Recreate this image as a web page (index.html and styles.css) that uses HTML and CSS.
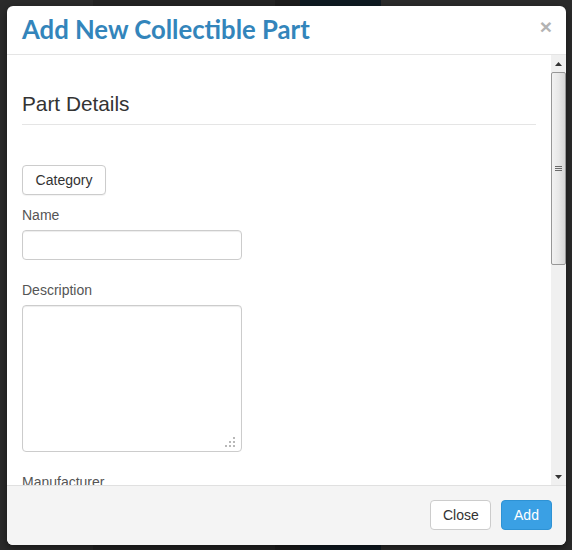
FILE: index.html
```html
<!DOCTYPE html>
<html>
<head>
<meta charset="utf-8">
<link rel="stylesheet" href="styles.css">
</head>
<body>
<div class="page">
  <div class="modal">
    <div class="modal-header">
      <h2 class="modal-title">Add New Collectible Part</h2>
      <span class="close-x">×</span>
    </div>
    <div class="modal-body">
      <div class="body-content">
        <h3 class="section-title">Part Details</h3>
        <button class="btn btn-default category-btn">Category</button>
        <label class="field-label">Name</label>
        <div class="text-input"></div>
        <label class="field-label label-gap">Description</label>
        <div class="text-area">
          <svg class="grip" width="10" height="10" viewBox="0 0 10 10">
            <rect x="8" y="0" width="2" height="2" fill="#b8b8b8"/>
            <rect x="4" y="4" width="2" height="2" fill="#b8b8b8"/>
            <rect x="8" y="4" width="2" height="2" fill="#b8b8b8"/>
            <rect x="0" y="8" width="2" height="2" fill="#b8b8b8"/>
            <rect x="4" y="8" width="2" height="2" fill="#b8b8b8"/>
            <rect x="8" y="8" width="2" height="2" fill="#b8b8b8"/>
          </svg>
        </div>
        <label class="field-label label-gap">Manufacturer</label>
      </div>
      <div class="scrollbar">
        <div class="sb-btn"><svg width="7" height="4" viewBox="0 0 7 4"><path d="M3.5 0 L7 4 L0 4 Z" fill="#333"/></svg></div>
        <div class="sb-thumb">
          <div class="sb-grip"><span></span><span></span><span></span></div>
        </div>
        <div class="sb-track"></div>
        <div class="sb-btn"><svg width="7" height="4" viewBox="0 0 7 4"><path d="M0 0 L7 0 L3.5 4 Z" fill="#333"/></svg></div>
      </div>
    </div>
    <div class="modal-footer">
      <button class="btn btn-default">Close</button>
      <button class="btn btn-primary">Add</button>
    </div>
  </div>
</div>
</body>
</html>
```
FILE: styles.css
```css
* { box-sizing: border-box; }
html, body { margin: 0; padding: 0; }
body {
  width: 572px;
  height: 550px;
  overflow: hidden;
  font-family: "Liberation Sans", Arial, sans-serif;
  background:
    linear-gradient(to right, #2b2b2b 0, #2b2b2b 93px, #242424 93px, #242424 275px, #1d1d1d 275px, #1d1d1d 300px, #0f1a22 300px, #0f1a22 381px, #2b2b2b 381px);
}
.page {
  padding: 6px 6px 5px 7px;
}
.modal {
  width: 559px;
  height: 539px;
  background: #fff;
  border-radius: 6px;
  overflow: hidden;
  display: flex;
  flex-direction: column;
  box-shadow: 0 3px 9px rgba(0,0,0,0.5);
}
.modal-header {
  height: 49px;
  border-bottom: 1px solid #e5e5e5;
  display: flex;
  align-items: center;
  justify-content: space-between;
  padding: 0 15px 0 15px;
  flex: none;
}
.modal-title {
  margin: -3px 0 0 0;
  font-family: Lato, "Open Sans", sans-serif;
  font-weight: 700;
  font-size: 25.7px;
  line-height: 30px;
  color: #3385bb;
}
.close-x {
  font-family: "Liberation Sans", Arial, sans-serif;
  font-weight: 700;
  font-size: 21px;
  line-height: 20px;
  color: #b3b3b3;
  margin-right: -1px;
  margin-top: -6px;
}
.modal-body {
  flex: 1;
  display: flex;
  min-height: 0;
  overflow: hidden;
}
.body-content {
  flex: 1;
  padding: 38px 15px 0 15px;
  overflow: hidden;
  display: flex;
  flex-direction: column;
  align-items: flex-start;
}
.section-title {
  align-self: stretch;
  margin: 0;
  font-size: 20.8px;
  font-weight: 400;
  line-height: 22px;
  color: #333;
  padding-bottom: 9px;
  border-bottom: 1px solid #e5e5e5;
}
.btn {
  font-family: "Liberation Sans", Arial, sans-serif;
  font-size: 14px;
  line-height: 20px;
  height: 30px;
  padding: 4px 12px;
  border-radius: 4px;
  border: 1px solid #ccc;
  background: #fff;
  color: #333;
  cursor: pointer;
}
.category-btn {
  margin-top: 40px;
  width: 84px;
  box-shadow: 0 1px 1px rgba(0,0,0,0.05);
}
.field-label {
  display: block;
  margin-top: 10px;
  font-size: 14px;
  line-height: 20px;
  color: #555;
}
.label-gap { margin-top: 20px; }
.text-input {
  margin-top: 5px;
  width: 220px;
  height: 30px;
  border: 1px solid #ccc;
  border-radius: 4px;
  box-shadow: inset 0 1px 1px rgba(0,0,0,0.075);
  flex: none;
}
.text-area {
  margin-top: 5px;
  width: 220px;
  height: 147px;
  border: 1px solid #ccc;
  border-radius: 4px;
  box-shadow: inset 0 1px 1px rgba(0,0,0,0.075);
  flex: none;
  display: flex;
  justify-content: flex-end;
  align-items: flex-end;
  padding: 0 6px 4px 0;
}
.grip { display: block; }
.scrollbar {
  width: 15px;
  flex: none;
  display: flex;
  flex-direction: column;
  background: #f0f0f0;
}
.sb-btn {
  height: 17px;
  display: flex;
  align-items: center;
  justify-content: center;
  flex: none;
}
.sb-btn svg { display: block; }
.sb-thumb {
  height: 193px;
  border: 1px solid #979797;
  border-radius: 2px;
  background: linear-gradient(to right, #f2f2f2 0%, #e8e8e8 50%, #d6d6d6 100%);
  display: flex;
  align-items: center;
  justify-content: center;
  flex: none;
}
.sb-grip {
  display: flex;
  flex-direction: column;
  gap: 1px;
  margin-top: -1px;
}
.sb-grip span {
  display: block;
  width: 7px;
  height: 1px;
  background: #6a6a6a;
}
.sb-track { flex: 1; }
.modal-footer {
  height: 60px;
  flex: none;
  border-top: 1px solid #e0e0e0;
  background: #f4f4f4;
  display: flex;
  justify-content: flex-end;
  align-items: flex-start;
  gap: 10px;
  padding: 14px 14px 0 0;
}
.modal-footer .btn-default { width: 61px; }
.btn-primary {
  width: 51px;
  background: #3aa0e4;
  border-color: #2e92d4;
  color: #fff;
}
```
